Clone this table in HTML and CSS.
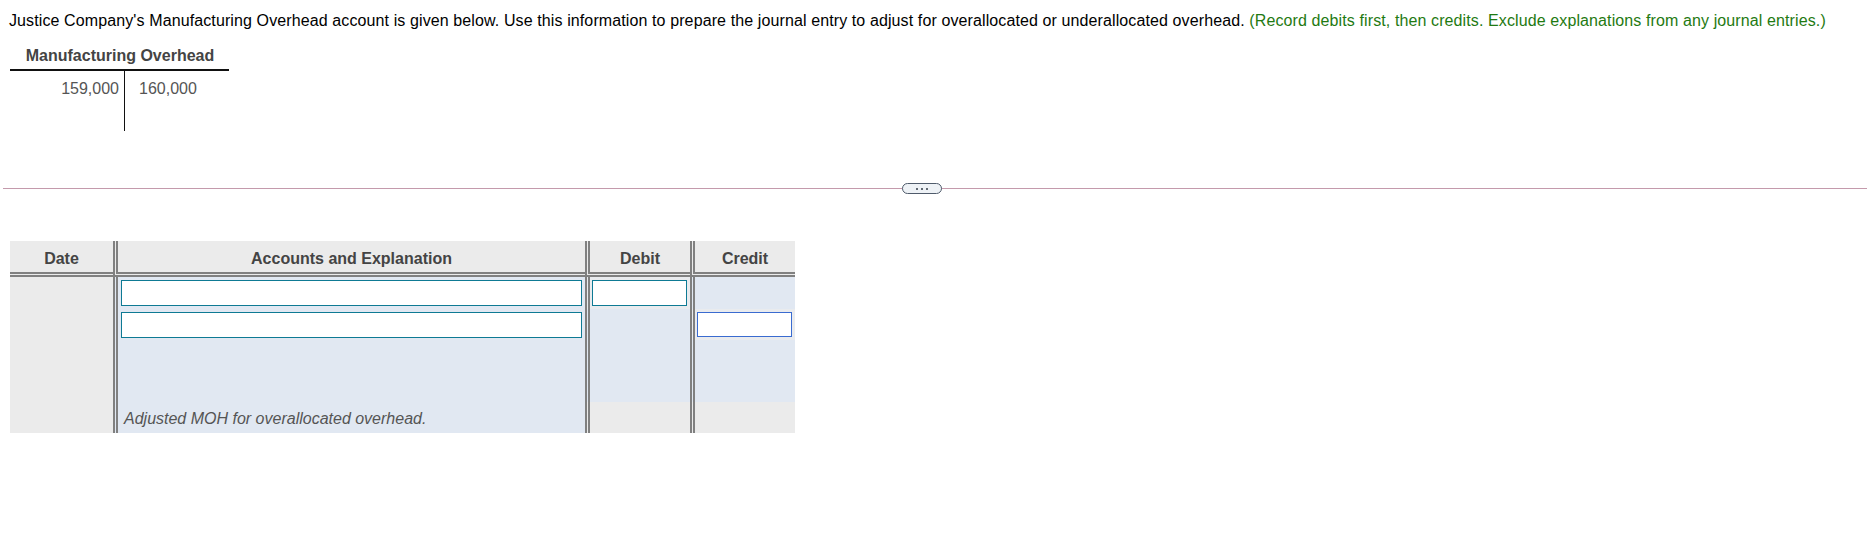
FILE: index.html
```html
<!DOCTYPE html>
<html>
<head>
<meta charset="utf-8">
<link rel="stylesheet" href="styles.css">
</head>
<body>
<p class="intro">Justice Company's Manufacturing Overhead account is given below. Use this information to prepare the journal entry to adjust for overallocated or underallocated overhead. <span class="hint">(Record debits first, then credits. Exclude explanations from any journal entries.)</span></p>

<div class="taccount">
  <div class="t-title">Manufacturing Overhead</div>
  <div class="t-body">
    <div class="t-left">159,000</div>
    <div class="t-right">160,000</div>
  </div>
</div>

<div class="divider">
  <span class="pill"><i></i><i></i><i></i></span>
</div>

<div class="journal">
  <div class="hd c-date">Date</div>
  <div class="hd c-acc sep">Accounts and Explanation</div>
  <div class="hd c-amt sep">Debit</div>
  <div class="hd c-amt sep">Credit</div>

  <div class="date-body"></div>

  <div class="cell acc sep r1"><span class="field wide"></span></div>
  <div class="cell light sep r1 infield"><span class="field"></span></div>
  <div class="cell blue sep r1"></div>

  <div class="cell acc sep r2"><span class="field wide"></span></div>
  <div class="cell blue sep r2"></div>
  <div class="cell light sep r2 infield"><span class="field focus"></span></div>

  <div class="cell acc sep r3"></div>
  <div class="cell blue sep r3"></div>
  <div class="cell blue sep r3"></div>

  <div class="cell acc sep r4 expl">Adjusted MOH for overallocated overhead.</div>
  <div class="cell grey sep r4"></div>
  <div class="cell grey sep r4"></div>
</div>
</body>
</html>
```

FILE: styles.css
```css
html, body {
  margin: 0;
  padding: 0;
  background: #ffffff;
}
body {
  font-family: "Liberation Sans", Arial, sans-serif;
  font-size: 16px;
  color: #000;
}
.intro {
  margin: 0;
  padding: 12px 0 0 9px;
  line-height: 18px;
  white-space: nowrap;
  letter-spacing: 0.11px;
}
.hint {
  color: #1f7a12;
}
.taccount {
  margin: 17px 0 0 10px;
  width: 219px;
}
.t-title {
  text-align: center;
  font-weight: bold;
  color: #444;
  line-height: 18px;
  padding-left: 1px;
  padding-bottom: 4px;
  border-bottom: 2px solid #111;
}
.t-body {
  display: flex;
  height: 60px;
}
.t-left {
  width: 115px;
  border-right: 1px solid #111;
  text-align: right;
  color: #555;
  padding: 9px 5px 0 0;
  box-sizing: border-box;
  line-height: 18px;
}
.t-right {
  padding: 9px 0 0 14px;
  color: #555;
  line-height: 18px;
}
.divider {
  position: relative;
  margin: 57px 0 0 3px;
  height: 1px;
  background: #c49aac;
}
.pill {
  position: absolute;
  left: 899px;
  top: -5px;
  width: 38px;
  height: 9px;
  border: 1px solid #4f5b6b;
  border-radius: 6px;
  background: #eef2f6;
  display: flex;
  justify-content: center;
  align-items: center;
  gap: 3px;
}
.pill i {
  width: 2px;
  height: 2px;
  background: #333c48;
  border-radius: 1px;
}
.journal {
  margin: 52px 0 0 10px;
  display: grid;
  grid-template-columns: 103px 472px 105px 105px;
  grid-template-rows: 36px 32px 31px 62px 31px;
  width: 785px;
}
.sep {
  border-left: 5px double #808080;
}
.hd {
  background: #ebebeb;
  font-weight: bold;
  color: #444;
  text-align: center;
  padding-top: 5px;
  line-height: 26px;
  border-bottom: 5px double #808080;
}
.date-body {
  grid-column: 1;
  grid-row: 2 / 6;
  background: #ebebeb;
}
.cell {
  box-sizing: border-box;
}
.acc {
  background: #e1e8f2;
  padding-left: 3px;
}
.blue {
  background: #e1e8f2;
}
.light {
  background: #e9ebee;
}
.grey {
  background: #ebebeb;
}
.r1 { padding-top: 3px; }
.r2 { padding-top: 3px; }
.infield {
  padding-left: 2px;
}
.field {
  display: block;
  box-sizing: border-box;
  width: 95px;
  height: 26px;
  background: #fff;
  border: 1px solid #0e7a94;
}
.field.wide {
  width: 461px;
}
.field.focus {
  border-color: #3a6bd0;
  height: 25px;
}
.expl {
  font-style: italic;
  color: #555;
  line-height: 18px;
  padding-top: 8px;
  padding-left: 6px;
}
```
